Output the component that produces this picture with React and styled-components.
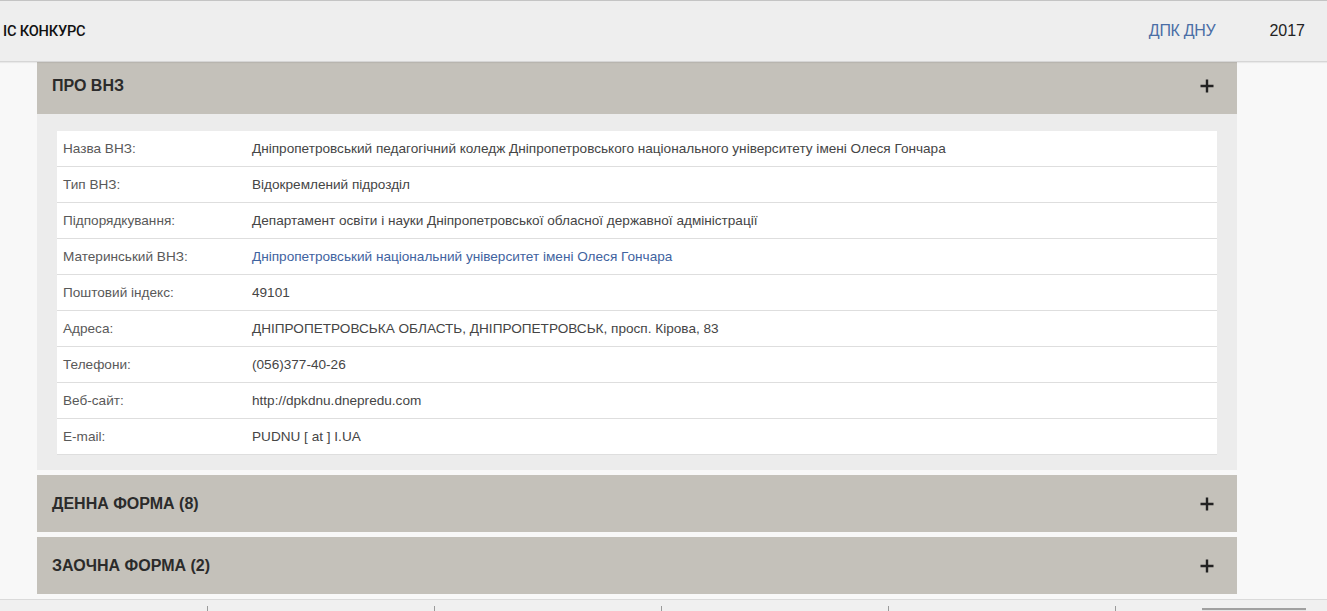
import React from 'react';
import styled, { createGlobalStyle } from 'styled-components';

const Global = createGlobalStyle`
  html, body { margin: 0; padding: 0; }
  body {
    background: #f8f8f8;
    font-family: "Liberation Sans", Arial, sans-serif;
    color: #333;
    overflow: hidden;
  }
`;

const Navbar = styled.header`
  height: 60px;
  border-top: 1px solid #c4c4c4;
  border-bottom: 1px solid #d6d6d6;
  background: #eeeeee;
  display: flex;
  align-items: center;
  position: relative;
  z-index: 2;
  box-shadow: 0 1px 1px rgba(0,0,0,0.06);
`;

const Brand = styled.div`
  font-family: Roboto, "Liberation Sans", sans-serif;
  font-weight: 500;
  font-size: 14.6px;
  letter-spacing: -0.2px;
  color: #111;
  padding-left: 3px;
  flex: 1;
`;

const NavLink = styled.a`
  font-size: 16px;
  color: #4a6ea6;
  text-decoration: none;
  letter-spacing: -0.3px;
  margin-right: 54px;
`;

const Year = styled.span`
  font-size: 16px;
  color: #222;
  margin-right: 22px;
`;

const Main = styled.main`
  width: 1200px;
  margin-left: 37px;
`;

const Panel = styled.section`
  margin-bottom: 5px;
`;

const PanelHead = styled.div`
  height: ${p => (p.$clipped ? '52px' : '57px')};
  padding: 0 22px 0 15px;
  padding-bottom: ${p => (p.$clipped ? '5px' : '0')};
  box-sizing: border-box;
  background: #c4c1ba;
  display: flex;
  align-items: center;
  justify-content: space-between;
  font-size: 16px;
  font-weight: bold;
  color: #2b2b2b;
`;

const PanelBody = styled.div`
  background: #ececec;
  padding: 17px 20px 15px;
`;

const InfoTable = styled.table`
  width: 100%;
  border-collapse: collapse;
  background: #fff;
  font-size: 13.6px;
  border-bottom: 1px solid #dedede;
`;

const Row = styled.tr`
  & + & td { border-top: 1px solid #dedede; }
`;

const Label = styled.td`
  width: 177px;
  padding: 8px 6px;
  line-height: 19px;
  color: #595959;
`;

const Value = styled.td`
  padding: 8px 6px;
  line-height: 19px;
  color: #454545;
`;

const ValueLink = styled.a`
  color: #3f63a0;
  text-decoration: none;
`;

const Footer = styled.footer`
  margin-top: 1px;
  border-top: 1px solid #dadada;
  background: #f0f0f0;
  height: 16px;
  display: flex;
`;

const FooterCell = styled.div`
  width: ${p => p.$w}px;
  margin-top: 6px;
  border-left: ${p => (p.$first ? 'none' : '1px solid #9a9a9a')};
  box-sizing: border-box;
`;

const FooterTab = styled.div`
  width: 104px;
  margin-top: 8px;
  margin-left: 86px;
  border-top: 2px solid #a0a0a0;
  background: #e4e4e4;
`;

const Plus = () => (
  <svg width="16" height="16" viewBox="0 0 16 16">
    <path d="M8 1.5v13M1.5 8h13" stroke="#222" strokeWidth="2.4" fill="none" />
  </svg>
);

const info = [
  ['Назва ВНЗ:', 'Дніпропетровський педагогічний коледж Дніпропетровського національного університету імені Олеся Гончара'],
  ['Тип ВНЗ:', 'Відокремлений підрозділ'],
  ['Підпорядкування:', 'Департамент освіти і науки Дніпропетровської обласної державної адміністрації'],
  ['Материнський ВНЗ:', 'Дніпропетровський національний університет імені Олеся Гончара', true],
  ['Поштовий індекс:', '49101'],
  ['Адреса:', 'ДНІПРОПЕТРОВСЬКА ОБЛАСТЬ, ДНІПРОПЕТРОВСЬК, просп. Кірова, 83'],
  ['Телефони:', '(056)377-40-26'],
  ['Веб-сайт:', 'http://dpkdnu.dnepredu.com'],
  ['E-mail:', 'PUDNU [ at ] I.UA'],
];

export default function App() {
  return (
    <>
      <Global />
      <Navbar>
        <Brand>ІС КОНКУРС</Brand>
        <NavLink href="#">ДПК ДНУ</NavLink>
        <Year>2017</Year>
      </Navbar>
      <Main>
        <Panel>
          <PanelHead $clipped>
            <span>ПРО ВНЗ</span>
            <Plus />
          </PanelHead>
          <PanelBody>
            <InfoTable>
              <tbody>
                {info.map(([k, v, link]) => (
                  <Row key={k}>
                    <Label>{k}</Label>
                    <Value>{link ? <ValueLink href="#">{v}</ValueLink> : v}</Value>
                  </Row>
                ))}
              </tbody>
            </InfoTable>
          </PanelBody>
        </Panel>
        <Panel>
          <PanelHead>
            <span>ДЕННА ФОРМА (8)</span>
            <Plus />
          </PanelHead>
        </Panel>
        <Panel>
          <PanelHead>
            <span>ЗАОЧНА ФОРМА (2)</span>
            <Plus />
          </PanelHead>
        </Panel>
      </Main>
      <Footer>
        <FooterCell $first $w={207} />
        <FooterCell $w={227} />
        <FooterCell $w={227} />
        <FooterCell $w={227} />
        <FooterCell $w={227} />
        <FooterCell $w={1} />
        <FooterTab />
      </Footer>
    </>
  );
}
